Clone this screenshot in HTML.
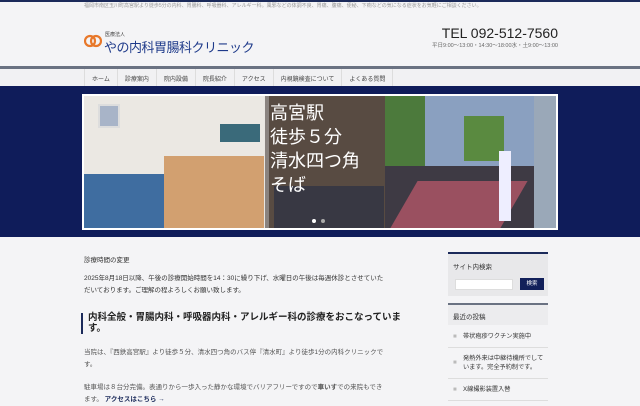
<!DOCTYPE html>
<html><head><meta charset="utf-8"><style>
*{margin:0;padding:0;box-sizing:border-box}
body{width:640px;height:400px;overflow:hidden;background:#f4f4f6;font-family:"Liberation Sans","Noto Sans CJK JP",sans-serif;color:#333;position:relative}
.a{position:absolute}
</style></head><body>
<div class="a" style="left:0;top:0;width:640px;height:2px;background:#1b2a5a"></div>
<div class="a" style="left:84px;top:3px;font-size:5px;color:#999;width:470px;line-height:7px">福岡市南区玉川町高宮駅より徒歩5分の内科、胃腸科、呼吸器科、アレルギー科。風邪などの体調不良、胃痛、腹痛、便秘、下痢などの気になる症状をお気軽にご相談ください。</div>
<svg class="a" style="left:84px;top:34px" width="18" height="16" viewBox="0 0 18 16"><circle cx="6" cy="7" r="5" fill="none" stroke="#e8782a" stroke-width="2.2"/><circle cx="12" cy="7" r="5" fill="none" stroke="#e8782a" stroke-width="2.2"/></svg>
<div class="a" style="left:105px;top:31px;font-size:5px;color:#444">医療法人</div>
<div class="a" style="left:104px;top:37px;font-size:13px;color:#1e3a8a;letter-spacing:-0.5px">やの内科胃腸科クリニック</div>
<div class="a" style="left:440px;top:25px;font-size:14px;color:#222;width:118px;text-align:right">TEL 092-512-7560</div>
<div class="a" style="left:400px;top:41px;font-size:5.5px;color:#666;width:158px;text-align:right">平日9:00〜13:00・14:30〜18:00水・土9:00〜13:00</div>
<div class="a" style="left:0;top:66px;width:640px;height:3px;background:#6a7282"></div>
<div class="a" style="left:0;top:69px;width:640px;height:17px;background:#f1f1f3"></div>
<div class="a" style="left:84px;top:69px;height:17px;display:flex;font-size:6px;color:#444">
<span style="padding:5px 7px;border-right:1px solid #ddd;border-left:1px solid #ddd">ホーム</span><span style="padding:5px 7px;border-right:1px solid #ddd">診療案内</span><span style="padding:5px 7px;border-right:1px solid #ddd">院内設備</span><span style="padding:5px 7px;border-right:1px solid #ddd">院長紹介</span><span style="padding:5px 7px;border-right:1px solid #ddd">アクセス</span><span style="padding:5px 7px;border-right:1px solid #ddd">内視鏡検査について</span><span style="padding:5px 7px;border-right:1px solid #ddd">よくある質問</span></div>
<div class="a" style="left:0;top:86px;width:640px;height:151px;background:#0f1c5a"></div>
<div class="a" style="left:82px;top:94px;width:476px;height:136px;background:#fff"></div>
<div class="a" style="left:84px;top:96px;width:472px;height:132px;overflow:hidden;background:#e9e6e2">
 <div class="a" style="left:0;top:0;width:180px;height:132px;background:#ebe8e3"></div>
 <div class="a" style="left:14px;top:8px;width:22px;height:24px;background:#a8b4c8;border:2px solid #ddd"></div>
 <div class="a" style="left:136px;top:28px;width:40px;height:18px;background:#3a6a7a"></div>
 <div class="a" style="left:0;top:78px;width:100px;height:54px;background:#3f6da0"></div>
 <div class="a" style="left:80px;top:60px;width:100px;height:72px;background:#d2a070"></div>
 <div class="a" style="left:185px;top:0;width:116px;height:132px;background:#7a6a5c"></div>
 <div class="a" style="left:190px;top:90px;width:110px;height:42px;background:#34425e"></div>
 <div class="a" style="left:301px;top:0;width:171px;height:132px;background:#8aa0c0"></div>
 <div class="a" style="left:301px;top:0;width:40px;height:70px;background:#4c7a3c"></div>
 <div class="a" style="left:380px;top:20px;width:40px;height:45px;background:#5a8a40"></div>
 <div class="a" style="left:301px;top:70px;width:171px;height:62px;background:#3e3a44"></div>
 <div class="a" style="left:320px;top:85px;width:110px;height:47px;background:#9a5060;transform:skewX(-30deg)"></div>
 <div class="a" style="left:415px;top:55px;width:12px;height:70px;background:#eef"></div>
 <div class="a" style="left:450px;top:0;width:22px;height:132px;background:#9aa8b8"></div>
 <div class="a" style="left:181px;top:0;width:120px;height:132px;background:rgba(60,50,45,.55)"></div>
 <div class="a" style="left:186px;top:5px;font-size:18px;line-height:24px;color:#fff">高宮駅<br>徒歩５分<br>清水四つ角<br>そば</div>
 <div class="a" style="left:228px;top:123px;width:4px;height:4px;border-radius:2px;background:#fff"></div>
 <div class="a" style="left:237px;top:123px;width:4px;height:4px;border-radius:2px;background:#aaa"></div>
</div>
<div class="a" style="left:84px;top:254px;font-size:6.5px;color:#333">診療時間の変更</div>
<div class="a" style="left:84px;top:273px;width:300px;font-size:6.5px;line-height:12px;color:#333">2025年8月18日以降、午後の診療開始時間を14：30に繰り下げ、水曜日の午後は毎週休診とさせていただいております。ご理解の程よろしくお願い致します。</div>
<div class="a" style="left:81px;top:313px;width:2px;height:21px;background:#1b2a5a"></div>
<div class="a" style="left:88px;top:312px;width:315px;font-size:9.5px;line-height:11px;color:#222;font-weight:bold">内科全般・胃腸内科・呼吸器内科・アレルギー科の診療をおこなっています。</div>
<div class="a" style="left:84px;top:347px;width:300px;font-size:6.5px;line-height:12px;color:#555">当院は、『西鉄高宮駅』より徒歩５分、清水四つ角のバス停『清水町』より徒歩1分の内科クリニックです。</div>
<div class="a" style="left:84px;top:382px;width:300px;font-size:6.5px;line-height:12px;color:#555">駐車場は８台分完備。表通りから一歩入った静かな環境でバリアフリーですので<b>車いす</b>での来院もできます。 <b style="color:#1b2a5a">アクセスはこちら →</b></div>
<div class="a" style="left:448px;top:252px;width:100px;height:2px;background:#1b2a5a"></div>
<div class="a" style="left:448px;top:254px;width:100px;height:42px;background:#e8e8ea"></div>
<div class="a" style="left:453px;top:261px;font-size:6.5px;color:#333">サイト内検索</div>
<div class="a" style="left:455px;top:279px;width:58px;height:11px;background:#fff;border:1px solid #ddd"></div>
<div class="a" style="left:520px;top:278px;width:24px;height:12px;background:#12205a;color:#fff;font-size:5.5px;text-align:center;line-height:12px">検索</div>
<div class="a" style="left:448px;top:303px;width:100px;height:2px;background:#6a7282"></div>
<div class="a" style="left:448px;top:305px;width:100px;height:20px;background:#ececee;font-size:6.5px;padding:6px 5px">最近の投稿</div>
<div class="a" style="left:448px;top:326px;width:100px;font-size:6.2px;line-height:9px;color:#333">
<div style="padding:6px 2px 6px 15px;border-bottom:1px solid #ddd;position:relative"><span style="position:absolute;left:5px;color:#bbb">■</span>帯状疱疹ワクチン実施中</div>
<div style="padding:6px 2px 6px 15px;border-bottom:1px solid #ddd;position:relative"><span style="position:absolute;left:5px;top:10px;color:#bbb">■</span>発熱外来は中継待機所でしています。完全予約制です。</div>
<div style="padding:6px 2px 6px 15px;border-bottom:1px solid #ddd;position:relative"><span style="position:absolute;left:5px;color:#bbb">■</span>X線撮影装置入替</div>
</div>
</body></html>
